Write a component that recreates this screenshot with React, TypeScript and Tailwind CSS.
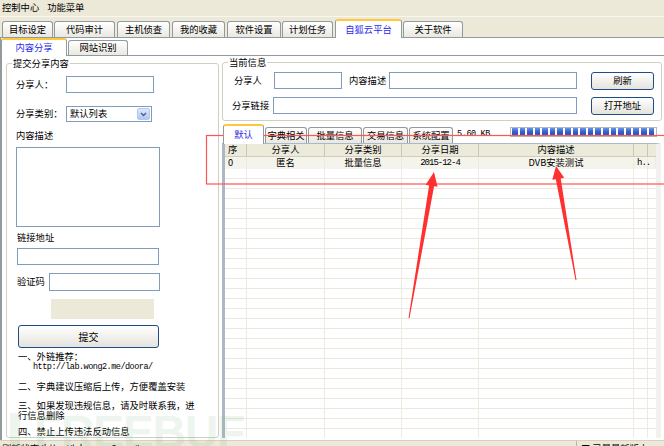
import React from 'react'

const ui = "font-['Noto_Sans_CJK_SC','Noto_Sans',sans-serif]"
const mono = "font-['Liberation_Mono',monospace]"

const mainTabs = [
  { label: '目标设定', cls: 'w-[51px] ml-[2px]' },
  { label: '代码审计', cls: 'w-[61px] ml-[1px]' },
  { label: '主机侦查', cls: 'w-[53px] ml-[2px]' },
  { label: '我的收藏', cls: 'w-[53px] ml-[2px]' },
  { label: '软件设置', cls: 'w-[54px] ml-[2px]' },
  { label: '计划任务', cls: 'w-[51px] ml-[1px]' },
  { label: '自狐云平台', cls: 'w-[67px] ml-[2px]', active: true },
  { label: '关于软件', cls: 'w-[60px] ml-[1px]' },
]

const listTabs = [
  { label: '默认', cls: 'w-[41px]', active: true },
  { label: '字典相关', cls: 'w-[42px] ml-[1px]' },
  { label: '批量信息', cls: 'w-[54px] ml-[1px]' },
  { label: '交易信息', cls: 'w-[45px] ml-[1px]' },
  { label: '系统配置', cls: 'w-[44px] ml-[1px]' },
]

const cols = ['w-[22px]', 'w-[78px]', 'w-[77px]', 'w-[77px]', 'w-[155px]', 'w-[14px]', 'flex-1']

function Tab({ label, cls, active, tall }: { label: string; cls: string; active?: boolean; tall: string }) {
  if (active) {
    return (
      <div
        className={`${cls} ${tall} relative z-10 -mb-px flex items-center justify-center rounded-t-[3px] border border-b-0 border-[#919B9C] border-t-2 border-t-[#FFC83C] bg-white text-[#2B2BE8]`}
      >
        {label}
      </div>
    )
  }
  return (
    <div
      className={`${cls} h-[16px] flex items-center justify-center rounded-t-[3px] border border-b-0 border-[#919B9C] bg-linear-to-b from-white to-[#E9E8E1]`}
    >
      {label}
    </div>
  )
}

function XpButton({ label, cls }: { label: string; cls: string }) {
  return (
    <div
      className={`${cls} flex items-center justify-center rounded-[3px] border border-[#1F4C86] bg-linear-to-b from-white to-[#E4E3DC]`}
    >
      {label}
    </div>
  )
}

function Input({ cls }: { cls: string }) {
  return <div className={`${cls} border border-[#7F9DB9] bg-white`} />
}

export default function App() {
  return (
    <div className={`${ui} relative flex h-[446px] w-[664px] flex-col overflow-hidden bg-[#ECE9D8] text-[9.3px] leading-none text-black`}>
      {/* menu */}
      <div className="flex h-[17px] items-center gap-[8px] border-b border-[#F7F6F1] pl-[2px]">
        <span>控制中心</span>
        <span>功能菜单</span>
      </div>

      {/* main tabs */}
      <div className="flex h-[20px] items-end">
        {mainTabs.map((t) => (
          <Tab key={t.label} {...t} tall="h-[19px]" />
        ))}
      </div>

      <div className="flex min-h-0 flex-1 flex-col border-l border-t border-[#919B9C] bg-white">
        {/* sub tabs */}
        <div className="flex h-[17px] items-end">
          <div className="relative z-10 -mb-px flex h-[18px] w-[66px] items-center justify-center rounded-t-[3px] border border-b-0 border-[#919B9C] border-t-2 border-t-[#FFC83C] bg-white text-[#2B2BE8]">
            内容分享
          </div>
          <div className="ml-[1px] flex h-[15px] w-[60px] items-center justify-center rounded-t-[3px] border border-b-0 border-[#919B9C] bg-linear-to-b from-white to-[#E9E8E1]">
            网站识别
          </div>
        </div>

        <div className="flex min-h-0 flex-1 border-l border-t border-[#919B9C]">
          {/* left group */}
          <fieldset className="mb-[2px] ml-[4px] flex w-[213px] flex-col rounded-[3px] border border-[#D0D0BF] pl-[9px]">
            <legend className="-ml-[4px] px-[1px] leading-[14px]">提交分享内容</legend>

            <div className="mt-[6px] flex h-[17px] items-center">
              <span className="w-[50px]">分享人：</span>
              <Input cls="h-[17px] w-[88px]" />
            </div>

            <div className="mt-[13px] flex h-[16px] items-center">
              <span className="w-[50px]">分享类别：</span>
              <div className="flex h-[16px] w-[86px] items-center justify-between border border-[#7F9DB9] bg-white p-px">
                <span className="pl-[2px]">默认列表</span>
                <div className="flex h-full w-[13px] items-center justify-center rounded-[2px] border border-[#B4C8F4] bg-linear-to-b from-[#DCE6FC] to-[#B3C7F4]">
                  <svg width="7" height="5" viewBox="0 0 7 5">
                    <path d="M1 1 L3.5 3.5 L6 1" fill="none" stroke="#4D6185" strokeWidth="1.4" />
                  </svg>
                </div>
              </div>
            </div>

            <div className="mt-[7px] flex h-[14px] items-center">内容描述</div>
            <Input cls="mt-[4px] h-[80px] w-[144px]" />

            <div className="mt-[4px] flex h-[14px] items-center pl-[1px]">链接地址</div>
            <Input cls="ml-[1px] mt-[3px] h-[17px] w-[142px]" />

            <div className="ml-[1px] mt-[8px] flex h-[18px] items-center">
              <span className="w-[32px]">验证码</span>
              <Input cls="h-[18px] w-[111px]" />
            </div>

            <div className="ml-[35px] mt-[8px] h-[20px] w-[103px] bg-[#ECE9D8]" />

            <XpButton label="提交" cls="ml-[2px] mt-[6px] h-[23px] w-[141px] text-[10px]" />

            <div className="ml-[2px] mt-[3px] leading-[11px]">
              <div>一、外链推荐：</div>
              <div className={`${mono} pl-[15px] text-[8.5px] tracking-[-0.5px]`}>http://lab.wong2.me/doora/</div>
            </div>
            <div className="ml-[2px] mt-[8px] leading-[11px]">二、字典建议压缩后上传，方便覆盖安装</div>
            <div className="ml-[2px] mt-[8px] leading-[10px]">
              三、如果发现违规信息，请及时联系我，进
              <br />
              行信息删除
            </div>
            <div className="ml-[2px] mt-[6px] leading-[11px]">四、禁止上传违法反动信息</div>
          </fieldset>

          {/* right column */}
          <div className="ml-[3px] flex w-[440px] flex-col">
            <fieldset className="rounded-[3px] border border-[#D0D0BF] pb-[5px]">
              <legend className="ml-[5px] px-[1px] leading-[12px]">当前信息</legend>
              <div className="mt-[4px] flex h-[18px] items-start pl-[11px]">
                <span className="flex h-[17px] w-[40px] items-center">分享人</span>
                <Input cls="h-[17px] w-[68px]" />
                <span className="ml-[7px] flex h-[17px] w-[40px] items-center">内容描述</span>
                <Input cls="h-[17px] w-[188px]" />
                <XpButton label="刷新" cls="ml-[14px] h-[18px] w-[63px]" />
              </div>
              <div className="mt-[7px] flex h-[18px] items-start pl-[9px]">
                <span className="flex h-[17px] w-[41px] items-center">分享链接</span>
                <Input cls="h-[17px] w-[304px]" />
                <XpButton label="打开地址" cls="ml-[14px] h-[18px] w-[63px]" />
              </div>
            </fieldset>

            {/* list tabs */}
            <div className="mt-[3px] flex h-[19px] items-end pl-[1px]">
              {listTabs.map((t) => (
                <Tab key={t.label} {...t} tall="h-[20px]" />
              ))}
              <span className={`${mono} mb-[5px] ml-[4px] text-[8.5px] tracking-[-0.4px]`}>5.60 KB</span>
              <div className="mb-[6px] ml-[20px] flex h-[10px] w-[147px] items-center gap-[2px] border border-[#B8B8B8] bg-white px-[1px]">
                {Array.from({ length: 19 }).map((_, i) => (
                  <div key={i} className="h-[8px] w-[5.6px] bg-linear-to-b from-[#6E93E3] via-[#2E5FD0] to-[#2753BD]" />
                ))}
              </div>
            </div>

            {/* list view */}
            <div className="mb-[2px] mr-[1px] flex min-h-0 flex-1 flex-col overflow-hidden border-l-[3px] border-r-[5px] border-t border-l-[#AEB7C6] border-r-[#F1F1EE] border-t-[#AEB7C6] bg-white">
              <div className="flex h-[13px] shrink-0 bg-[#EBEADB]">
                {['序', '分享人', '分享类别', '分享日期', '内容描述', '', ''].map((h, i) => (
                  <div
                    key={i}
                    className={`${cols[i]} flex items-center border-b border-r border-b-[#D2CDB6] border-r-[#C9C6B4] ${i === 0 ? 'justify-start pl-[3px]' : 'justify-center'} ${i === 6 ? 'border-r-0' : ''}`}
                  >
                    {h}
                  </div>
                ))}
              </div>
              <div className="flex h-[12px] shrink-0 bg-[#F4F3EC]">
                {[
                  { t: '0', c: 'justify-start pl-[3px]' },
                  { t: '匿名', c: 'justify-center' },
                  { t: '批量信息', c: 'justify-center' },
                  { t: '2015-12-4', c: `justify-center ${mono} text-[9px] tracking-[-1px]` },
                  { t: 'DVB安装测试', c: 'justify-center' },
                  { t: 'h..', c: `justify-start pl-[3px] ${mono} text-[9px] tracking-[-1px]` },
                  { t: '', c: '' },
                ].map((d, i) => (
                  <div key={i} className={`${cols[i]} flex items-center border-r border-[#EDEBDF] ${d.c}`}>
                    {d.t}
                  </div>
                ))}
              </div>
              {Array.from({ length: 28 }).map((_, r) => (
                <div key={r} className="flex h-[10px] shrink-0 border-b border-[#ECE9DC]">
                  {cols.map((c, i) => (
                    <div key={i} className={`${c} border-r border-[#EEECE1] ${i === 6 ? 'border-r-0' : ''}`} />
                  ))}
                </div>
              ))}
            </div>
          </div>
        </div>
      </div>

      {/* status bar */}
      <div className="flex h-[6px] items-start overflow-hidden border-t border-[#D5D2C4] bg-[#ECE9D8]">
        <span className="w-[576px] pl-[2px] pt-[2px] leading-[10px]">刷新状态 'http://lab.wong2.me/'</span>
        <span className="border-l border-[#B8B5A6] pl-[4px] pt-[2px] leading-[10px]">■ 已是最新版本</span>
      </div>

      {/* watermark */}
      <div className="pointer-events-none absolute left-[10px] top-[409px] flex items-start gap-[14px] font-['Liberation_Sans',sans-serif] text-[46px] font-bold leading-none tracking-[-1px] text-[#7FB07F] opacity-[0.13]">
        <span className="mt-[4px] h-[40px] w-[10px] bg-[#7FB07F]" />
        <span>FREEBUF</span>
      </div>

      {/* annotations */}
      <svg className="pointer-events-none absolute inset-0" width="664" height="446" viewBox="0 0 664 446">
        <rect x="206.5" y="135.5" width="470" height="48.5" fill="none" stroke="#FF5555" strokeWidth="1.2" />
        <polygon points="408.5,317.9 409.5,318.1 434.1,186.2 437.5,186.8 434,172 425.7,184.8 429.1,185.4" fill="#FF3030" />
        <polygon points="575.5,280.1 576.5,279.9 560.7,178.4 564.2,177.8 556,166 552.3,179.8 555.8,179.2" fill="#FF3030" />
      </svg>
    </div>
  )
}
